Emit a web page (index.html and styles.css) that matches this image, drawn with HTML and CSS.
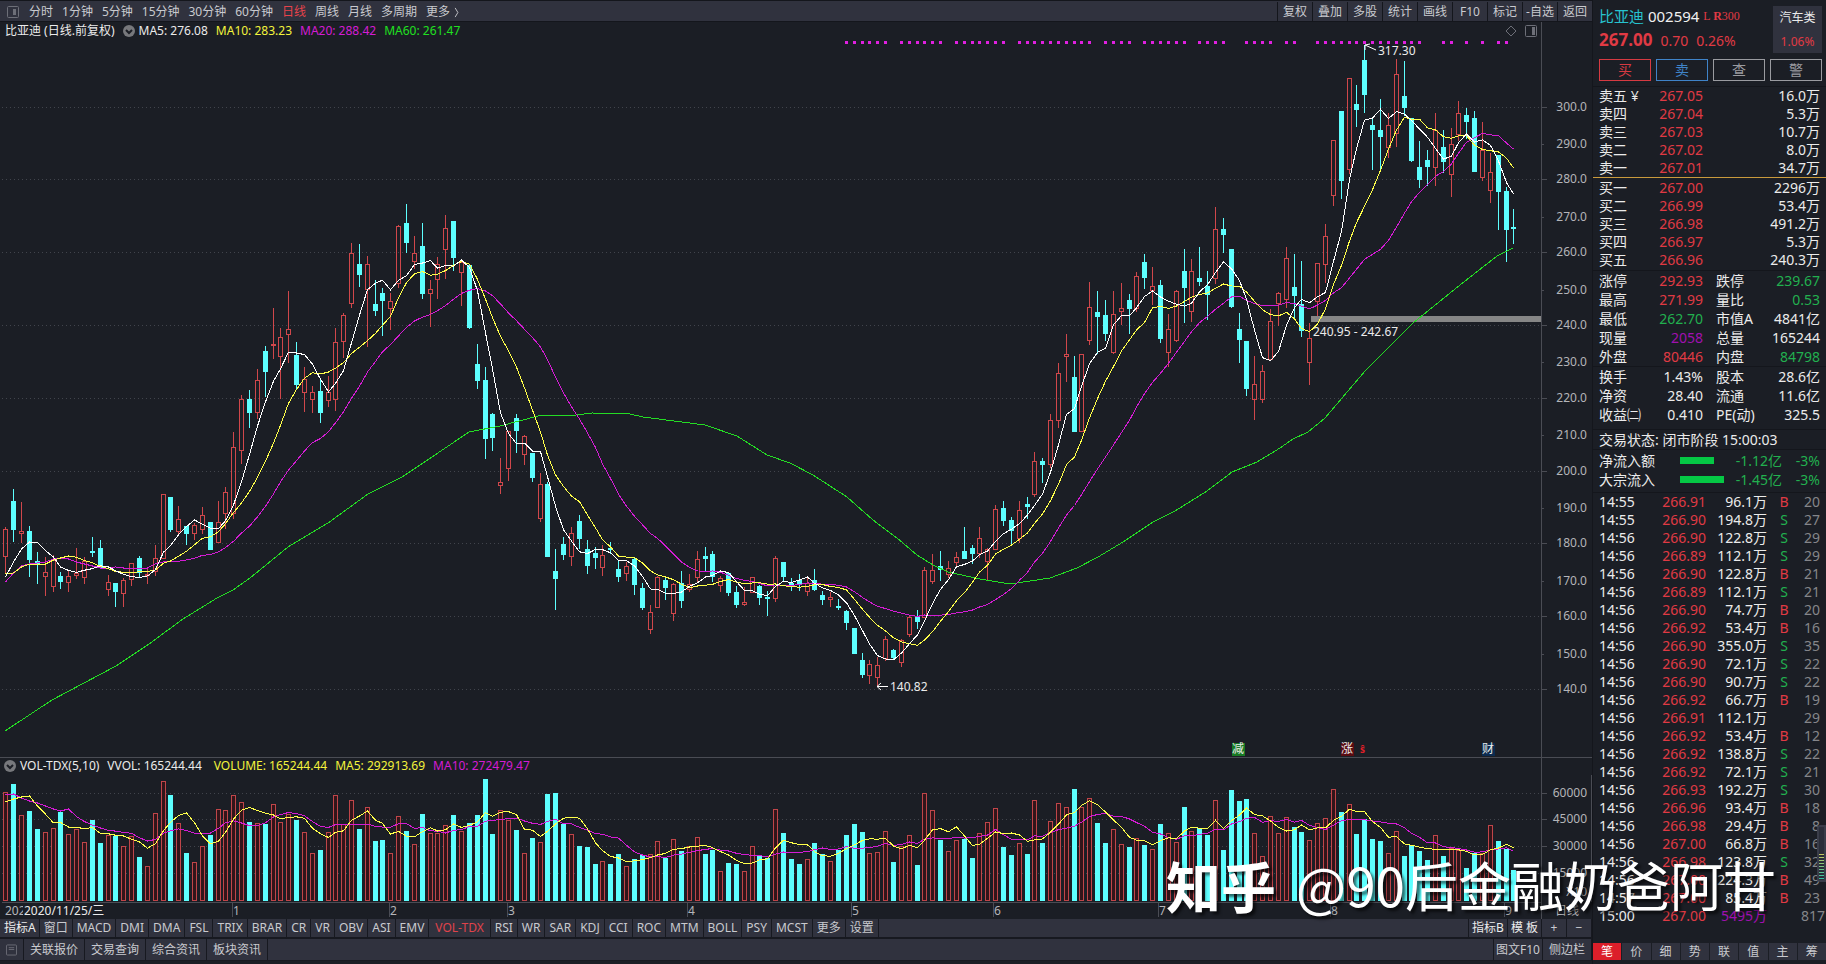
FILE: index.html
```html
<!DOCTYPE html>
<html lang="zh-CN">
<head>
<meta charset="utf-8">
<title>比亚迪 002594</title>
<link rel="stylesheet" href="styles.css">
</head>
<body>
<div class="terminal">
  <main class="workspace">
    <nav class="topbar">
      <button class="icon-btn" aria-label="侧栏"><svg class="icon" viewBox="0 0 12 12"><rect x="0.5" y="0.5" width="11" height="11" rx="1"/><path d="M8.5 3v6M7.5 3v6M6.5 3v6" /></svg></button>
      <div class="periods">
        <button>分时</button><button>1分钟</button><button>5分钟</button><button>15分钟</button><button>30分钟</button><button>60分钟</button><button class="active">日线</button><button>周线</button><button>月线</button><button>多周期</button><button>更多 <svg class="more" viewBox="0 0 5 12"><path d="M1 1l3 5-3 5"/></svg></button>
      </div>
      <div class="tools">
        <button>复权</button><button>叠加</button><button>多股</button><button>统计</button><button>画线</button><button>F10</button><button>标记</button><button>-自选</button><button>返回</button>
      </div>
    </nav>

    <section class="price-panel">
      <div class="legend">
        <span>比亚迪 (日线.前复权)</span>
        <svg class="chevron" viewBox="0 0 12 12"><circle cx="6" cy="6" r="6"/><path d="M3 5l3 3 3-3"/></svg>
        <span>MA5: 276.08</span><span class="c-yellow">MA10: 283.23</span><span class="c-magenta">MA20: 288.42</span><span class="c-lime">MA60: 261.47</span>
        <span class="legend-icons">
          <svg viewBox="0 0 12 12"><path d="M6 1l5 5-5 5-5-5z"/></svg>
          <svg viewBox="0 0 12 12"><rect x="0.5" y="0.5" width="11" height="11" rx="1"/><path class="solid" d="M7 2h3v8H7z"/></svg>
        </span>
      </div>
      <svg id="price" class="chart" viewBox="0 40 1592 717" role="img" aria-label="日线K线图"></svg>
    </section>

    <section class="volume-panel">
      <div class="legend">
        <svg class="chevron" viewBox="0 0 12 12"><circle cx="6" cy="6" r="6"/><path d="M3 5l3 3 3-3"/></svg>
        <span>VOL-TDX(5,10)</span><span>VVOL: 165244.44</span><span class="c-yellow wide">VOLUME: 165244.44</span><span class="c-yellow">MA5: 292913.69</span><span class="c-magenta">MA10: 272479.47</span>
      </div>
      <svg id="volume" class="chart" viewBox="0 775 1592 144" role="img" aria-label="成交量"></svg>
    </section>

    <nav class="indicators">
      <button class="bright">指标A</button><button>窗口</button><button>MACD</button><button>DMI</button><button>DMA</button><button>FSL</button><button>TRIX</button><button>BRAR</button><button>CR</button><button>VR</button><button>OBV</button><button>ASI</button><button>EMV</button><button class="active">VOL-TDX</button><button>RSI</button><button>WR</button><button>SAR</button><button>KDJ</button><button>CCI</button><button>ROC</button><button>MTM</button><button>BOLL</button><button>PSY</button><button>MCST</button><button>更多</button><button>设置</button>
      <span class="spacer"></span>
      <button class="bright">指标B</button><button class="bright">模 板</button><button class="zoom">+</button><button class="zoom">−</button>
    </nav>
    <nav class="links">
      <button class="icon-btn" aria-label="窗口"><svg class="icon" viewBox="0 0 12 12"><rect x="0.5" y="0.5" width="11" height="11" rx="1"/><path d="M3 3.5h6M3 5.5h6"/></svg></button>
      <button>关联报价</button><button>交易查询</button><button>综合资讯</button><button>板块资讯</button>
      <span class="spacer"></span>
      <button class="tight">图文F10</button><button class="side">侧边栏</button>
    </nav>
  </main>

  <aside class="quote">
    <header class="quote-head">
      <div class="ident">
        <h1><span class="c-cyan">比亚迪</span> 002594 <small>L <b>R</b>300</small></h1>
        <p class="c-red"><strong>267.00</strong><span>0.70</span><span>0.26%</span></p>
      </div>
      <div class="sector"><span>汽车类</span><span class="c-red">1.06%</span></div>
    </header>
    <div class="actions">
      <button class="buy">买</button><button class="sell">卖</button><button>查</button><button>警</button>
    </div>
    <table class="book asks"><tbody id="asks"></tbody></table>
    <table class="book bids"><tbody id="bids"></tbody></table>
    <table class="stats">
      <tbody>
        <tr><th>涨停</th><td class="c-red">292.93</td><th>跌停</th><td class="c-green">239.67</td></tr>
        <tr><th>最高</th><td class="c-red">271.99</td><th>量比</th><td class="c-green">0.53</td></tr>
        <tr><th>最低</th><td class="c-green">262.70</td><th>市值A</th><td>4841亿</td></tr>
        <tr><th>现量</th><td class="c-purple">2058</td><th>总量</th><td>165244</td></tr>
        <tr><th>外盘</th><td class="c-red">80446</td><th>内盘</th><td class="c-green">84798</td></tr>
      </tbody>
    </table>
    <table class="stats basics">
      <tbody>
        <tr><th>换手</th><td>1.43%</td><th>股本</th><td>28.6亿</td></tr>
        <tr><th>净资</th><td>28.40</td><th>流通</th><td>11.6亿</td></tr>
        <tr><th>收益㈡</th><td>0.410</td><th>PE(动)</th><td>325.5</td></tr>
      </tbody>
    </table>
    <p class="status">交易状态: 闭市阶段 15:00:03</p>
    <table class="flow">
      <tbody>
        <tr><th>净流入额</th><td class="bar"><i style="width:34px"></i></td><td>-1.12亿</td><td>-3%</td></tr>
        <tr><th>大宗流入</th><td class="bar"><i style="width:44px"></i></td><td>-1.45亿</td><td>-3%</td></tr>
      </tbody>
    </table>
    <table class="ticks"><tbody id="ticks"></tbody></table>
    <nav class="modes">
      <button class="on">笔</button><button>价</button><button>细</button><button>势</button><button>联</button><button>值</button><button>主</button><button>筹</button>
    </nav>
    <div class="meter"></div>
  </aside>
  <div class="credit"><b>知乎</b><span>@90后金融奶爸阿甘</span></div>
</div>
<script src="chart.js"></script>
</body>
</html>
```
FILE: styles.css
```css
* { box-sizing: border-box; }
body {
  margin: 0;
  background: #1b1e25;
  color: #ebebeb;
  font: 12px/18px "Noto Sans", "Noto Sans CJK SC", sans-serif;
}
button {
  margin: 0;
  padding: 0;
  border: 0;
  background: none;
  color: #c9cacf;
  font: inherit;
  white-space: nowrap;
}
.terminal {
  position: relative;
  display: grid;
  grid-template-columns: minmax(0, 1fr) 234px;
  min-height: 100vh;
}
.workspace { display: flex; flex-direction: column; min-width: 0; }

.c-yellow { color: #f4f43c; }
.c-magenta { color: #d41cd4; }
.c-lime { color: #20e020; }
.c-cyan { color: #27c3cf; }
.c-red { color: #e03a44; }
.c-green { color: #22b04f; }
.c-purple { color: #a010b0; }

.topbar {
  display: flex;
  align-items: stretch;
  height: 22px;
  padding-top: 1px;
  border-top: 1px solid #14161c;
  border-bottom: 1px solid #14161c;
  background: #30323e;
}
.icon-btn { display: flex; align-items: center; justify-content: center; width: 22px; }
.topbar .icon-btn { width: 26px; }
.icon { width: 12px; height: 12px; fill: none; stroke: #6d6f78; }
.periods { display: flex; gap: 9px; padding-left: 3px; }
.more { width: 5px; height: 11px; margin-left: 1px; fill: none; stroke: #c9cacf; vertical-align: -2px; }
.active { color: #e8434b; }
.tools { display: flex; margin-left: auto; }
.tools button { width: 35px; border-left: 1px solid #14161c; }

.legend {
  display: flex;
  align-items: center;
  gap: 8px;
  height: 18px;
  margin-right: 50px;
  padding-left: 5px;
  border-right: 1px solid #4a4c54;
  white-space: nowrap;
}
.chevron { width: 12px; height: 12px; margin-right: -4px; fill: #77787c; }
.chevron path { fill: none; stroke: #1b1e25; stroke-width: 2; }
.legend-icons { display: flex; gap: 8px; margin-left: auto; padding-right: 4px; }
.legend-icons svg { width: 12px; height: 12px; fill: none; stroke: #6d6f78; }
.legend-icons .solid { fill: #6d6f78; stroke: none; }
.volume-panel { border-top: 1px solid #4a4c54; }
.volume-panel .legend { height: 17px; padding-left: 4px; padding-bottom: 2px; }
.volume-panel .wide { margin-left: 4px; }

.chart { display: block; width: 100%; height: auto; }
.chart text { fill: #ebebeb; font-size: 12px; }
.chart text.axis { fill: #b4b5b9; }
.chart text.end { text-anchor: end; }
.chart .lines, .chart .grid, .chart .bars { shape-rendering: crispEdges; }
.grid path { fill: none; stroke: #41444c; stroke-dasharray: 1 3; }
.grid .edge { stroke: #4a4c54; stroke-dasharray: none; }
.up { fill: none; stroke: #d0474b; }
.vol-up { fill: #32151a; stroke: #c04549; }
.down { fill: #5dffff; }
.lines polyline { fill: none; stroke-width: 1; }
.ma5 { stroke: #ffffff; }
.ma10 { stroke: #ffff4a; }
.ma20 { stroke: #d41cd4; }
.ma60 { stroke: #24dc24; }
.dot { fill: #e020e0; }
.arrow { fill: none; stroke: #ffffff; }
.tag-green { fill: #177a24; }
.tag-red { fill: #5a0c12; }
.tag-blue { fill: #0b2b50; }
.chart text.dollar { fill: #e01e28; font-size: 10px; font-weight: 700; }

.indicators, .links { display: flex; background: #30323e; }
.indicators { height: 20px; border-bottom: 2px solid #171920; padding-left: 1px; }
.indicators button { padding: 0 4px; border-right: 1px solid #171920; }
.indicators .bright { padding: 0 3px; color: #ececec; }
.indicators .active { padding: 0 6px; color: #e0434b; }
.indicators .zoom { width: 25px; }
.indicators .spacer + button { border-left: 1px solid #171920; }
.spacer { flex: 1; }
.links { height: 22px; border-bottom: 1px solid #171920; }
.links button { padding: 0 6px; border-right: 1px solid #171920; }
.links .icon-btn { width: 24px; }
.links .tight { padding: 0 2px; border-left: 1px solid #171920; }

.quote {
  position: relative;
  display: flex;
  flex-direction: column;
  border-left: 1px solid #14161c;
  font-size: 14px;
}
.quote-head { display: flex; justify-content: space-between; height: 59px; padding: 6px 4px 0 6px; }
.quote h1 { margin: 0; font-size: 15px; font-weight: 400; line-height: 20px; color: #f0f0f0; white-space: nowrap; }
.quote h1 small { color: #e03a44; font: 12px/12px "Liberation Serif", serif; vertical-align: 2px; }
.ident p { display: flex; gap: 8px; align-items: baseline; margin: 5px 0 0; }
.ident strong { font-size: 17px; }
.sector {
  display: flex;
  flex-direction: column;
  justify-content: space-between;
  width: 49px;
  height: 47px;
  padding: 3px 0 2px;
  background: #30323e;
  text-align: center;
  font-size: 12px;
}
.actions { display: grid; grid-template-columns: repeat(4, 1fr); gap: 5px; padding: 0 4px 5px 6px; border-bottom: 1px solid #14161c; }
.actions button { height: 22px; border: 1px solid #9a9ba0; color: #9a9ba0; line-height: 18px; }
.actions .buy { border-color: #d63a42; color: #d63a42; }
.actions .sell { border-color: #3f83c8; color: #3f83c8; }

.quote table { width: 100%; border-collapse: collapse; table-layout: fixed; }
.quote th { padding: 0 0 0 6px; font-weight: 400; text-align: left; white-space: nowrap; }
.quote td { padding: 0; text-align: right; white-space: nowrap; }
.book tr, .ticks tr { height: 18px; }
.book th { width: 58px; }
.book td:nth-child(2) { width: 52px; }
.book td:last-child, .stats td:last-child, .flow td:last-child, .ticks td:last-child { padding-right: 6px; }
.asks { border-bottom: 1px solid #c99a3c; }
.bids { margin: 1px 0; }
.stats { border-top: 1px solid #14161c; }
.stats tr, .flow tr { height: 19px; line-height: 19px; }
.stats th:first-child { width: 58px; }
.stats td:nth-child(2) { width: 52px; }
.quote .stats th:nth-child(3) { padding-left: 13px; width: 64px; }
.status { margin: 5px 0 0; padding-left: 6px; border-top: 1px solid #14161c; border-bottom: 1px solid #14161c; line-height: 19px; }
.flow { margin: 1px 0 3px; }
.flow th { width: 87px; }
.flow td { color: #22b04f; }
.flow .bar { width: 45px; text-align: left; }
.flow .bar i { display: block; height: 7px; background: #05c845; }
.flow td:nth-child(3) { width: 57px; }
.ticks { border-top: 1px solid #14161c; }
.ticks th { width: 58px; }
.ticks td:nth-child(2) { width: 55px; }
.ticks td:nth-child(3) { width: 61px; }
.ticks td:nth-child(4) { width: 34px; text-align: center; }
.ticks td:last-child { color: #85868a; }
.modes { display: grid; grid-template-columns: repeat(8, 1fr); gap: 1px; margin-top: auto; margin-bottom: 4px; font-size: 12px; }
.modes button { height: 17px; background: #30323e; line-height: 17px; }
.modes .on { background: #dc1f2a; color: #ffffff; }
.meter {
  position: absolute;
  right: 0;
  bottom: 82px;
  width: 9px;
  height: 57px;
  border: 2px solid #3a3d4a;
  border-radius: 3px 0 0 3px;
  background: repeating-linear-gradient(transparent 0 1px, #2b2e3a 1px 3px), linear-gradient(#2b2e3a 50%, #c8c860 50%, #2fc0a8 100%);
}
.credit {
  position: absolute;
  right: 50px;
  bottom: 44px;
  display: flex;
  gap: 20px;
  color: #ffffff;
  font: 53px/72px "Noto Sans CJK SC", sans-serif;
  text-shadow: 3px 3px 3px rgba(0, 0, 0, 0.6);
  white-space: nowrap;
  pointer-events: none;
}
.credit b { font-size: 55px; }
```
FILE: chart.js
```js
// Daily bars: direction (r = up, c = down), high, body top, body bottom, low, volume top.
const BARS = `
r 527 529 556 573 792|c 489 501 529 541 784|r 502 531 533 542 815|c 526 531 559 576 811|c 552 561 563 583 829
r 557 572 576 595 832|r 555 560 586 591 828|c 572 576 581 588 812|r 571 576 582 591 834|r 548 573 575 578 829
r 557 561 577 583 842|c 537 551 552 556 820|c 540 548 567 567 843|r 575 582 589 595 835|c 583 583 591 606 836
r 578 580 593 606 846|r 563 563 579 585 836|c 556 558 572 577 857|r 568 574 575 583 866|r 545 558 571 575 813
r 494 494 558 558 781|c 497 497 529 531 795|r 506 519 531 533 823|c 526 526 533 544 853|r 523 525 533 539 862
r 507 515 529 533 846|c 522 522 549 549 835|r 501 522 542 542 809|r 487 492 513 528 810|r 432 447 513 518 795
r 395 399 450 463 802|c 390 399 412 427 822|r 369 380 412 418 823|c 346 351 371 396 824|r 308 344 345 358 804
r 328 337 356 398 822|r 291 329 334 362 814|c 342 355 384 388 820|r 367 379 392 411 832|r 386 392 399 412 853
c 379 391 412 422 850|r 376 392 400 406 832|r 328 342 399 410 795|r 313 315 341 357 824|r 243 253 303 307 800
c 244 264 274 286 829|r 256 264 289 346 807|c 280 304 310 315 841|c 288 293 300 335 840|r 293 301 308 329 853
r 225 226 283 287 816|c 204 223 242 252 831|r 236 253 261 268 844|c 223 246 293 298 814|r 280 289 293 326 833
r 257 264 279 298 833|r 215 228 249 278 825|c 221 221 257 270 815|r 260 262 272 305 831|c 265 265 327 328 823
c 344 364 380 388 815|c 367 380 438 458 779|c 413 414 437 450 834|r 458 482 485 493 810|r 431 431 468 480 820
c 414 418 430 452 830|r 435 436 454 464 853|c 453 453 477 481 838|r 473 484 518 521 842|c 482 484 556 556 794
c 549 571 578 609 793|c 537 544 554 559 824|r 527 533 556 565 834|c 515 521 538 548 846|c 540 549 565 573 847
c 547 553 557 568 864|r 545 555 567 575 861|c 542 548 549 553 864|c 561 569 576 581 854|r 562 566 573 580 866
c 558 559 584 594 859|c 583 588 607 609 855|r 605 612 629 633 854|r 576 577 607 607 841|c 577 580 587 599 858
r 583 584 613 620 839|c 571 583 600 607 851|r 574 584 589 591 846|r 551 559 577 581 837|c 547 556 558 570 854
c 551 554 576 581 850|r 576 578 585 591 871|c 573 573 592 595 863|c 586 592 604 607 864|r 587 602 604 605 871
r 577 577 592 592 846|c 585 586 597 604 855|c 591 597 598 615 858|r 556 558 598 601 809|c 562 562 576 580 833
c 578 583 584 590 859|c 574 580 584 590 864|r 576 583 591 595 859|c 569 580 589 590 843|c 591 595 599 604 854
r 592 597 599 606 861|c 599 606 607 609 850|c 610 611 622 629 835|c 628 628 653 653 824|c 653 660 674 677 832
r 660 664 675 683 853|r 657 665 677 685 852|r 636 639 658 660 831|c 649 650 657 658 862|r 639 640 662 666 846
r 615 617 634 636 835|c 610 617 621 628 865|r 567 570 617 617 793|r 554 570 581 583 810|c 551 566 569 580 840
r 561 568 574 577 851|r 552 557 562 566 840|c 527 551 558 558 839|c 545 548 553 563 858|r 527 538 553 557 833
r 548 549 561 579 822|r 505 509 549 549 808|c 501 508 520 525 847|c 517 520 530 543 855|r 501 510 538 542 843
c 497 504 506 518 854|r 452 461 494 496 800|c 458 461 464 482 843|r 414 420 464 467 821|r 363 373 420 427 803
r 334 354 356 381 807|c 356 377 431 431 789|r 354 354 431 431 807|r 282 307 340 344 798|c 291 312 316 353 823
c 300 315 333 340 843|r 291 314 352 353 829|r 283 308 311 324 844|c 294 300 308 333 847|r 272 276 308 311 838
c 254 262 277 288 845|r 267 286 290 304 849|c 280 285 338 342 824|r 314 329 352 366 833|r 290 291 340 341 842
c 249 271 287 322 807|r 259 271 311 321 831|c 247 278 281 285 828|c 271 286 294 319 835|r 207 229 278 283 800
c 218 229 234 252 850|c 249 249 306 307 790|c 313 329 339 362 801|c 341 341 388 395 799|r 356 384 399 419 833
r 365 371 399 402 856|r 309 321 359 360 816|r 292 293 303 325 833|r 247 258 299 307 817|c 254 287 295 318 827
c 261 304 330 336 832|r 323 338 362 384 840|r 263 263 301 315 823|r 224 236 264 282 818|r 140 140 195 205 789
c 111 111 180 198 812|r 78 78 169 173 804|c 85 104 109 126 834|c 45 60 94 112 819|c 117 125 129 169 839
c 99 130 136 169 841|r 113 125 147 157 853|r 59 74 133 146 831|c 61 96 107 115 856|c 118 118 160 161 845
c 141 167 179 187 851|c 150 160 166 185 860|r 113 130 167 185 835|c 130 147 161 172 856|r 128 144 174 196 848
r 101 113 134 140 850|c 108 115 121 138 868|c 111 118 171 171 853|r 122 150 177 180 853|r 153 172 190 202 825
c 155 155 191 229 841|c 187 191 229 261 849|c 209 227 228 243 870`
  .trim().split(/[|\n]/).map(s => {
    const [dir, ...n] = s.split(' ');
    const [high, top, bottom, low, vol] = n.map(Number);
    return { up: dir === 'r', high, top, bottom, low, vol, close: dir === 'r' ? top : bottom };
  });

const MA60 = '5,731 52,700 116,666 149,644 183,619 217,598 233,590 250,578 288,547 328,523 368,494 402,477 429,459 469,432 500,426 538,416 577,415 592,413 630,414 643,417 705,425 737,436 767,455 790,463 813,475 847,497 873,520 897,538 917,555 933,565 948,572 980,579 1010,584 1050,578 1077,568 1098,557 1123,542 1153,522 1175,511 1207,491 1232,472 1257,462 1280,448 1293,439 1308,432 1325,418 1365,371 1413,323 1460,285 1497,256 1513,248';
const SIGNALS = [[107, 112], [114, 119], [121, 127], [129, 138], [140, 143], [145, 150], [152, 155], [158, 161], [163, 164], [167, 180], [183, 184], [186, 186], [188, 188], [190, 191]];
const BASE = 901;
const RIGHT = 1541;

const xAt = i => 5 + Math.ceil(i * 7.854);

// Moving average; `seed` holds the values that depend on bars before the first one.
function average(values, n, seed) {
  return values.map((_, i) => {
    const y = i < seed.length ? seed[i] : values.slice(i - n + 1, i + 1).reduce((a, b) => a + b) / n;
    return (xAt(i) + 0.5) + ',' + y.toFixed(1);
  }).join(' ');
}

const line = (cls, points) => `<polyline class="${cls}" points="${points}"/>`;
const label = (x, y, text, cls = '') => `<text x="${x}" y="${y}" class="${cls}">${text}</text>`;

function candle(b, i) {
  const x = xAt(i);
  if (b.up) {
    const h = Math.max(b.bottom - b.top, 1);
    return `<path class="up" d="M${x + 0.5} ${b.high}V${b.top}M${x + 0.5} ${b.top + h}V${b.low + 1}M${x - 1.5} ${b.top + 0.5}h4v${h}h-4z"/>`;
  }
  return `<path class="down" d="M${x} ${b.high}h1V${b.low + 1}h-1zM${x - 2} ${b.top}h5V${b.bottom + 1}h-5z"/>`;
}

function volumeBar(b, i) {
  const x = xAt(i);
  return b.up
    ? `<rect class="vol-up" x="${x - 1.5}" y="${b.vol + 0.5}" width="4" height="${BASE - b.vol - 1}"/>`
    : `<rect class="down" x="${x - 2}" y="${b.vol}" width="5" height="${BASE - b.vol}"/>`;
}

function drawPrice() {
  let grid = '', axis = '';
  for (let p = 300; p >= 140; p -= 10) {
    const y = Math.floor(107 + (300 - p) * 3.64) + (p % 20 ? 1 : 0);
    if (p % 20 === 0) grid += `<path d="M2 ${y + 0.5}H${RIGHT}"/>`;
    grid += `<path class="edge" d="M${RIGHT} ${y + 0.5}h${p % 20 ? 3 : 6}"/>`;
    axis += label(1587, y + 4, p + '.0', 'axis end');
  }
  grid += `<path class="edge" d="M${RIGHT + 0.5} 40V757"/>`;
  const closes = BARS.map(b => b.close);
  const dots = SIGNALS.flatMap(([a, b]) => Array.from({ length: b - a + 1 }, (_, k) => a + k))
    .map(i => `<rect class="dot" x="${xAt(i) - 1}" y="41" width="3" height="3"/>`).join('');
  document.getElementById('price').innerHTML =
    `<g class="grid">${grid}</g>${axis}<g class="bars">${dots}<rect x="1311" y="316" width="230" height="6" fill="#868686"/>${BARS.map(candle).join('')}</g>` +
    `<g class="lines">${line('ma60', MA60)}` +
    line('ma20', average(closes, 20, [582, 573, 566, 564, 563, 562, 559, 558, 559, 562, 564, 566, 568, 568, 567, 568, 568, 568, 568])) +
    line('ma10', average(closes, 10, [574, 573, 567, 564, 564, 564, 560, 558, 556])) +
    line('ma5', average(closes, 5, [577, 562, 549, 542])) + '</g>' +
    '<path class="arrow" d="M1365 45l11 5M1365 45v5M1365 45l5-1M877 686.5h11M881 683l-4 3.5 4 3.5"/>' +
    label(1378, 55, '317.30') + label(890, 691, '140.82') + label(1313, 336, '240.95 - 242.67') +
    '<rect class="tag-green" x="1232" y="743" width="13" height="13"/><rect class="tag-red" x="1341" y="743" width="13" height="13"/><rect class="tag-blue" x="1482" y="743" width="13" height="13"/>' +
    label(1232, 753, '减') + label(1341, 753, '涨') + label(1360, 753, 'ŝ', 'dollar') + label(1482, 753, '财');
}

function drawVolume() {
  const levels = [[793, '60000'], [819, '45000'], [846, '30000'], [873, '15000']];
  let out = levels.map(([y]) => `<path d="M2 ${y + 0.5}H${RIGHT}"/><path class="edge" d="M${RIGHT} ${y + 0.5}h6"/>`).join('');
  out += `<path class="edge" d="M${RIGHT + 0.5} 775V919M2 902.5H${RIGHT}M1591.5 775V902"/>`;
  const months = [[233, 1], [390, 2], [508, 3], [688, 4], [852, 5], [994, 6], [1159, 7], [1331, 8], [1505, 9]];
  out += months.map(([x]) => `<path class="edge" d="M${x - 0.5} 903V917"/>`).join('');
  const vols = BARS.map(b => b.vol);
  document.getElementById('volume').innerHTML =
    `<g class="grid">${out}</g>` +
    [...levels, [892, 'X10']].map(([y, t]) => label(1587, y + 4, t, 'axis end')).join('') +
    `<g class="bars">${BARS.map(volumeBar).join('')}</g><g class="lines">` +
    line('ma20', average(vols, 10, [795, 794, 798, 801, 803, 806, 809, 811, 809])) +
    line('ma10', average(vols, 5, [802, 799, 797, 796])) + '</g>' +
    months.map(([x, m]) => label(x, 915, m, 'axis')).join('') +
    label(5, 915, '202', 'axis') + '<rect x="23" y="904" width="84" height="14" fill="#1b1e25"/>' +
    label(24, 915, '2020/11/25/三') + label(1555, 915, '日线', 'axis');
}

function drawBook(id, rows) {
  document.getElementById(id).innerHTML = rows
    .map(([n, p, q]) => `<tr><th>${n}</th><td class="c-red">${p}</td><td>${q}万</td></tr>`).join('');
}

function drawTicks() {
  const rows = `14:55 266.91 96.1 B 20|14:55 266.90 194.8 S 27|14:56 266.90 122.8 S 29|14:56 266.89 112.1 S 29|14:56 266.90 122.8 B 21|14:56 266.89 112.1 S 21|14:56 266.90 74.7 B 20|14:56 266.92 53.4 B 16|14:56 266.90 355.0 S 35|14:56 266.90 72.1 S 22|14:56 266.90 90.7 S 22|14:56 266.92 66.7 B 19|14:56 266.91 112.1 - 29|14:56 266.92 53.4 B 12|14:56 266.92 138.8 S 22|14:56 266.92 72.1 S 21|14:56 266.93 192.2 S 30|14:56 266.96 93.4 B 18|14:56 266.98 29.4 B 8|14:56 267.00 66.8 B 16|14:56 266.98 123.8 S 32|14:56 267.00 224.3 B 49|14:57 267.00 85.4 B 23|15:00 267.00 5495 - 817`;
  document.getElementById('ticks').innerHTML = rows.split('|').map(r => {
    const [t, p, q, side, n] = r.split(' ');
    const cls = side === 'B' ? 'c-red' : 'c-green';
    return `<tr><th>${t}</th><td class="c-red">${p}</td><td class="${q === '5495' ? 'c-purple' : ''}">${q}万</td><td class="${cls}">${side === '-' ? '' : side}</td><td>${n}</td></tr>`;
  }).join('');
}

drawPrice();
drawVolume();
drawBook('asks', [['卖五 ¥', '267.05', '16.0'], ['卖四', '267.04', '5.3'], ['卖三', '267.03', '10.7'], ['卖二', '267.02', '8.0'], ['卖一', '267.01', '34.7']]);
drawBook('bids', [['买一', '267.00', '2296'], ['买二', '266.99', '53.4'], ['买三', '266.98', '491.2'], ['买四', '266.97', '5.3'], ['买五', '266.96', '240.3']]);
drawTicks();
```
